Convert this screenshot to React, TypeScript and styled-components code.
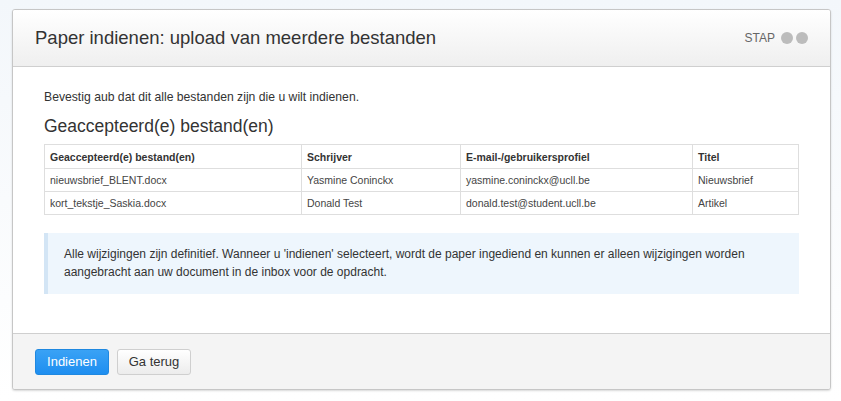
import React from 'react'
import styled, {createGlobalStyle} from 'styled-components'

// -------------------------------------------------------------
// Data.
// -------------------------------------------------------------

const files = [
  {
    name: 'nieuwsbrief_BLENT.docx',
    author: 'Yasmine Coninckx',
    email: 'yasmine.coninckx@ucll.be',
    title: 'Nieuwsbrief'
  },
  {
    name: 'kort_tekstje_Saskia.docx',
    author: 'Donald Test',
    email: 'donald.test@student.ucll.be',
    title: 'Artikel'
  }
]

// -------------------------------------------------------------
// Components.
// -------------------------------------------------------------

const GlobalStyle = createGlobalStyle`
  html, body {
    margin: 0;
    padding: 0;
  }

  body {
    background: linear-gradient(#f3f7fb, #ffffff 400px);
    font-family: 'Liberation Sans', Arial, sans-serif;
    color: #333;
  }
`

const Page = styled.div`
  padding: 9px 10px 11px 12px;
`

const Card = styled.div`
  display: flex;
  flex-direction: column;

  height: 379px;

  background: #fff;
  border: 1px solid #c6c6c6;
  border-radius: 3px;
  box-shadow: 0 1px 2px rgba(0, 0, 0, 0.15);
  overflow: hidden;
`

const Header = styled.header`
  display: flex;
  align-items: center;
  justify-content: space-between;

  height: 56px;
  padding: 0 22px 0 22px;

  background: linear-gradient(#ffffff, #efefef);
  border-bottom: 1px solid #cfcfcf;
`

const Title = styled.h1`
  margin: 0;

  font-size: 18.5px;
  font-weight: normal;
  color: #333;
`

const Steps = styled.div`
  display: flex;
  align-items: center;
  gap: 3px;

  font-size: 12px;
  color: #666;

  span {
    margin-right: 3px;
  }
`

const Dot = styled.i`
  display: block;
  width: 12px;
  height: 12px;

  background: #bcbcbc;
  border-radius: 50%;
`

const Body = styled.main`
  flex: 1;

  padding: 23px 31px 0 31px;
`

const Intro = styled.p`
  margin: 0 0 12px;

  font-size: 12.2px;
`

const SectionTitle = styled.h2`
  margin: 0 0 7px;

  font-size: 17.5px;
  font-weight: normal;
  color: #333;
`

const Table = styled.table`
  width: 100%;

  border-collapse: collapse;
  font-size: 10.5px;
  color: #444;

  th,
  td {
    height: 22px;
    padding: 0 5px;

    border: 1px solid #dedede;
    text-align: left;
  }

  th {
    height: 23px;

    font-weight: bold;
    color: #333;
  }
`

const Notice = styled.div`
  margin-top: 18px;
  padding: 12px 16px 13px;

  background: #eef6fd;
  border-left: 4px solid #d3e5f5;

  font-size: 12px;
  line-height: 18px;
  color: #333;
`

const Footer = styled.footer`
  display: flex;
  align-items: center;
  gap: 8px;

  height: 55px;
  padding: 0 22px;

  background: #f4f4f4;
  border-top: 1px solid #cfcfcf;
`

const Button = styled.button<{primary?: boolean}>`
  width: 74px;
  height: 26px;
  padding: 0;

  color: ${p => (p.primary ? '#fff' : '#333')};

  background: ${p =>
    p.primary
      ? 'linear-gradient(#3aa2f5, #1e8ef0)'
      : 'linear-gradient(#ffffff, #ececec)'};
  border: 1px solid ${p => (p.primary ? '#1f88e0' : '#cfcfcf')};
  border-radius: 3px;

  font-family: inherit;
  font-size: 13px;
  cursor: pointer;
`

// -------------------------------------------------------------
// Export.
// -------------------------------------------------------------

export default () => (
  <Page>
    <GlobalStyle />
    <Card>
      <Header>
        <Title>Paper indienen: upload van meerdere bestanden</Title>
        <Steps>
          <span>STAP</span>
          <Dot />
          <Dot />
        </Steps>
      </Header>
      <Body>
        <Intro>Bevestig aub dat dit alle bestanden zijn die u wilt indienen.</Intro>
        <SectionTitle>Geaccepteerd(e) bestand(en)</SectionTitle>
        <Table>
          <colgroup>
            <col style={{width: 257}} />
            <col style={{width: 159}} />
            <col style={{width: 232}} />
            <col />
          </colgroup>
          <thead>
            <tr>
              <th>Geaccepteerd(e) bestand(en)</th>
              <th>Schrijver</th>
              <th>E-mail-/gebruikersprofiel</th>
              <th>Titel</th>
            </tr>
          </thead>
          <tbody>
            {files.map(f => (
              <tr key={f.name}>
                <td>{f.name}</td>
                <td>{f.author}</td>
                <td>{f.email}</td>
                <td>{f.title}</td>
              </tr>
            ))}
          </tbody>
        </Table>
        <Notice>
          Alle wijzigingen zijn definitief. Wanneer u 'indienen' selecteert, wordt de
          paper ingediend en kunnen er alleen wijzigingen worden aangebracht aan uw
          document in de inbox voor de opdracht.
        </Notice>
      </Body>
      <Footer>
        <Button primary type="button">
          Indienen
        </Button>
        <Button type="button">Ga terug</Button>
      </Footer>
    </Card>
  </Page>
)
